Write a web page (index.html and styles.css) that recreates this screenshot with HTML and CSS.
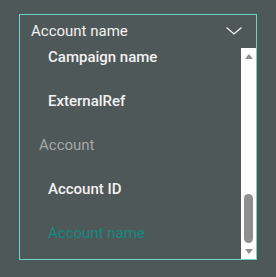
FILE: index.html
```html
<!DOCTYPE html>
<html lang="en">
<head>
    <meta charset="UTF-8">
    <meta name="viewport" content="width=device-width, initial-scale=1.0">
    <title>Select</title>
    <link rel="stylesheet" href="styles.css">
</head>
<body>
    <div class="select">
        <div class="select-head">
            <span class="select-value">Account name</span>
            <svg class="chevron" width="16" height="8" viewBox="0 0 16 8">
                <path d="M0.5 0.5 L8 7 L15.5 0.5" fill="none" stroke="#f2f2f2" stroke-width="1.3"/>
            </svg>
        </div>
        <div class="select-body">
            <div class="options">
                <div class="option-list">
                    <div class="option">Campaign name</div>
                    <div class="option">ExternalRef</div>
                    <div class="group">Account</div>
                    <div class="option">Account ID</div>
                    <div class="option selected">Account name</div>
                </div>
            </div>
            <div class="scrollbar">
                <span class="arrow up"></span>
                <div class="track">
                    <div class="thumb"></div>
                </div>
                <span class="arrow down"></span>
            </div>
        </div>
    </div>
</body>
</html>
```
FILE: styles.css
```css
* {
    margin: 0;
    padding: 0;
    box-sizing: border-box;
}
body {
    background-color: #4f5858;
    font-family: Roboto, 'Liberation Sans', sans-serif;
    font-size: 15px;
    color: #f2f2f2;
    padding: 14px 0 0 19px;
}
.select {
    width: 238px;
    border: 1px solid #6ed3c2;
}
.select-head {
    display: flex;
    align-items: center;
    justify-content: space-between;
    height: 33px;
    padding: 0 14px 0 11px;
}
.select-value {
    line-height: 33px;
}
.chevron {
    display: block;
    margin-top: -2px;
}
.select-body {
    display: flex;
    height: 211px;
}
.options {
    flex: 1;
    overflow: hidden;
}
.option-list {
    margin-top: -13px;
}
.option,
.group {
    line-height: 44px;
    white-space: nowrap;
}
.option {
    padding-left: 28px;
    font-weight: 500;
}
.group {
    padding-left: 19px;
    color: #a3a9a9;
}
.option.selected {
    color: #148a84;
    font-weight: 400;
}
.scrollbar {
    width: 15px;
    background: #fcfcfc;
    display: flex;
    flex-direction: column;
    align-items: center;
    padding: 6px 0 5px;
}
.arrow {
    width: 0;
    height: 0;
    border-left: 4px solid transparent;
    border-right: 4px solid transparent;
}
.arrow.up {
    border-bottom: 5px solid #8f8f8f;
}
.arrow.down {
    border-top: 5px solid #8f8f8f;
}
.track {
    flex: 1;
    width: 100%;
    display: flex;
    flex-direction: column;
    justify-content: flex-end;
    align-items: center;
    padding-bottom: 6px;
}
.thumb {
    width: 9px;
    height: 49px;
    border-radius: 5px;
    background: #8f8f8f;
}
```
